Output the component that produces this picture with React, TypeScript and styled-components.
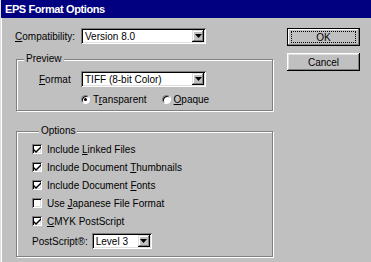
import styled, { createGlobalStyle } from 'styled-components';

const GlobalStyle = createGlobalStyle`
  html, body {
    margin: 0;
    padding: 0;
    background: #c0c0c0;
  }

  body {
    font-family: "Liberation Sans", Arial, sans-serif;
  }
`;

const options = [
  { label: 'Include Linked Files', key: 'L', checked: true },
  { label: 'Include Document Thumbnails', key: 'T', checked: true },
  { label: 'Include Document Fonts', key: 'F', checked: true },
  { label: 'Use Japanese File Format', key: 'J', checked: false },
  { label: 'CMYK PostScript', key: 'C', checked: true },
];

// underline the mnemonic letter, like a win32 dialog does
const Mnemonic = ({ text, letter }: { text: string; letter: string }) => {
  const i = text.indexOf(letter);
  if (i < 0) return <span>{text}</span>;
  return (
    <span>
      {text.slice(0, i)}
      <u>{text[i]}</u>
      {text.slice(i + 1)}
    </span>
  );
};

const Arrow = () => (
  <svg width="7" height="4" viewBox="0 0 7 4">
    <path d="M0 0h7L3.5 4z" fill="#000" />
  </svg>
);

const Select = ({ value, width }: { value: string; width: number }) => (
  <SelectBox $width={width}>
    <SelectValue>{value}</SelectValue>
    <SelectButton>
      <Arrow />
    </SelectButton>
  </SelectBox>
);

const App = () => {
  return (
    <>
      <GlobalStyle />
      <Dialog>
        <TitleBar>EPS Format Options</TitleBar>
        <Body>
          <LeftColumn>
            <CompatRow>
              <CompatLabel>
                <Mnemonic text="Compatibility:" letter="C" />
              </CompatLabel>
              <Select value="Version 8.0" width={125} />
            </CompatRow>

            <PreviewGroup>
              <Legend>Preview</Legend>
              <FormatRow>
                <FormatLabel>
                  <Mnemonic text="Format" letter="F" />
                </FormatLabel>
                <Select value="TIFF (8-bit Color)" width={125} />
              </FormatRow>
              <RadioRow>
                <RadioItem>
                  <Radio $on />
                  <Mnemonic text="Transparent" letter="r" />
                </RadioItem>
                <RadioItem>
                  <Radio />
                  <Mnemonic text="Opaque" letter="O" />
                </RadioItem>
              </RadioRow>
            </PreviewGroup>

            <OptionsGroup>
              <Legend>Options</Legend>
              {options.map((o) => (
                <CheckRow key={o.label}>
                  <CheckBox>
                    {o.checked && (
                      <svg width="7" height="7" viewBox="0 0 7 7">
                        <path d="M0 3l2 2 5-5v2L2 7 0 5z" fill="#000" />
                      </svg>
                    )}
                  </CheckBox>
                  <Mnemonic text={o.label} letter={o.key} />
                </CheckRow>
              ))}
              <LevelRow>
                <LevelLabel>PostScript®:</LevelLabel>
                <Select value="Level 3" width={60} />
              </LevelRow>
            </OptionsGroup>
          </LeftColumn>

          <ButtonColumn>
            <Button $default>
              <FocusRing>OK</FocusRing>
            </Button>
            <Button>Cancel</Button>
          </ButtonColumn>
        </Body>
      </Dialog>
    </>
  );
};

export default App;

const Dialog = styled.div`
  width: 371px;
  height: 262px;
  overflow: hidden;
  box-sizing: border-box;
  border-left: 1px solid #dfdfdf;
  box-shadow: inset 1px 0 0 #fff;

  display: flex;
  flex-direction: column;

  background: #c0c0c0;
  font-size: 10px;
  color: #000;
`;

const TitleBar = styled.div`
  height: 18px;
  padding-left: 4px;

  display: flex;
  align-items: center;

  background: #000080;
  color: #fff;
  font-size: 11px;
  font-weight: 700;
  letter-spacing: -0.4px;
`;

const Body = styled.div`
  padding: 10px 0 0 14px;

  display: flex;
  column-gap: 14px;
`;

const LeftColumn = styled.div`
  width: 258px;

  display: flex;
  flex-direction: column;
`;

const CompatRow = styled.div`
  height: 16px;

  display: flex;
  align-items: center;
`;

const CompatLabel = styled.span`
  width: 66px;
  white-space: nowrap;
`;

const SelectBox = styled.div<{ $width: number }>`
  width: ${({ $width }) => $width}px;
  height: 16px;
  box-sizing: border-box;
  padding: 2px;

  display: flex;
  align-items: stretch;

  background: #fff;
  box-shadow: inset 1px 1px #808080, inset -1px -1px #fff, inset 2px 2px #000,
    inset -2px -2px #dfdfdf;
`;

const SelectValue = styled.span`
  flex: 1;
  padding-left: 2px;

  display: flex;
  align-items: center;
  white-space: nowrap;
  overflow: hidden;
`;

const SelectButton = styled.span`
  width: 12px;

  display: flex;
  align-items: center;
  justify-content: center;

  background: #c0c0c0;
  box-shadow: inset -1px -1px #000, inset 1px 1px #dfdfdf, inset -2px -2px #808080,
    inset 2px 2px #fff;
`;

const Group = styled.fieldset`
  margin: 0 0 0 1px;
  padding: 0;
  min-width: 0;

  border: 1px solid #808080;
  box-shadow: inset 1px 1px 0 #fff, 1px 1px 0 #fff;
`;

const PreviewGroup = styled(Group)`
  margin-top: 9px;
  padding: 6px 0 5px 0;
`;

const OptionsGroup = styled(Group)`
  margin-top: 14px;
  padding: 3px 0 6px 15px;
`;

const Legend = styled.legend`
  margin-left: 7px;
  padding: 0 2px;
  line-height: 12px;
  background: #c0c0c0;
`;

const FormatRow = styled.div`
  height: 16px;

  display: flex;
  align-items: center;
`;

const FormatLabel = styled.span`
  width: 42px;
  padding-left: 22px;
`;

const RadioRow = styled.div`
  height: 12px;
  margin-top: 6px;
  padding-left: 64px;

  display: flex;
  align-items: center;
  column-gap: 15px;
`;

const RadioItem = styled.label`
  display: flex;
  align-items: center;
  column-gap: 3px;
  white-space: nowrap;
`;

const Radio = styled.span<{ $on?: boolean }>`
  width: 9px;
  height: 9px;
  box-sizing: border-box;
  border-radius: 50%;

  display: flex;
  align-items: center;
  justify-content: center;

  background: #fff;
  border: 1px solid;
  border-color: #808080 #fff #fff #808080;
  box-shadow: inset 1px 1px #000;

  &::after {
    content: '';
    width: 3px;
    height: 3px;
    border-radius: 50%;
    background: ${({ $on }) => ($on ? '#000' : 'transparent')};
  }
`;

const CheckRow = styled.label`
  height: 18px;

  display: flex;
  align-items: center;
  column-gap: 5px;
  white-space: nowrap;
`;

const CheckBox = styled.span`
  width: 10px;
  height: 10px;
  box-sizing: border-box;

  display: flex;
  align-items: center;
  justify-content: center;

  background: #fff;
  box-shadow: inset 1px 1px #808080, inset -1px -1px #fff, inset 2px 2px #000,
    inset -2px -2px #dfdfdf;
`;

const LevelRow = styled.div`
  height: 18px;
  margin-top: 2px;
  margin-left: -15px;
  padding-left: 15px;

  display: flex;
  align-items: center;
  column-gap: 4px;
`;

const LevelLabel = styled.span`
  white-space: nowrap;
`;

const ButtonColumn = styled.div`
  display: flex;
  flex-direction: column;
  row-gap: 7px;
`;

const Button = styled.div<{ $default?: boolean }>`
  width: 73px;
  height: 18px;
  box-sizing: border-box;

  display: flex;
  align-items: center;
  justify-content: center;

  background: #c0c0c0;
  box-shadow: ${({ $default }) =>
    $default
      ? 'inset 0 0 0 1px #000, inset -2px -2px #808080, inset 2px 2px #fff'
      : 'inset -1px -1px #000, inset 1px 1px #fff, inset -2px -2px #808080, inset 2px 2px #dfdfdf'};
`;

const FocusRing = styled.span`
  width: 65px;
  height: 12px;
  box-sizing: border-box;

  display: flex;
  align-items: center;
  justify-content: center;

  outline: 1px dotted #000;
  outline-offset: -1px;
`;
